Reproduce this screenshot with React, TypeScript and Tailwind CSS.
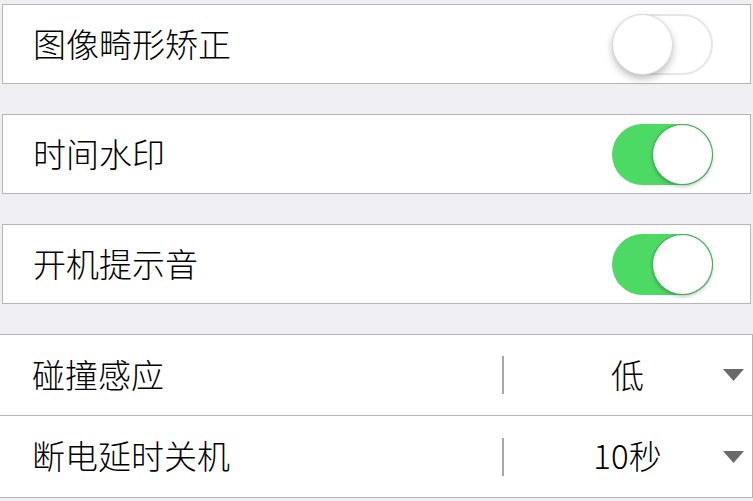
import React from "react";

function Toggle({ on }: { on: boolean }) {
  return on ? (
    <div className="relative h-[61px] w-[101px] rounded-full bg-[#4cd964]">
      <div className="absolute right-[1px] top-[1px] h-[59px] w-[59px] rounded-full bg-white shadow-[0_2px_4px_rgba(0,0,0,0.3)] ring-1 ring-[#3fae55]" />
    </div>
  ) : (
    <div className="relative h-[61px] w-[101px] rounded-full border-2 border-[#e6e6e6] bg-white">
      <div className="absolute left-[-1px] top-[-1px] h-[59px] w-[59px] rounded-full bg-white shadow-[0_4px_8px_rgba(0,0,0,0.3)] ring-1 ring-[#dcdcdc]" />
    </div>
  );
}

function ToggleRow({ label, on }: { label: string; on: boolean }) {
  return (
    <div className="mx-[2px] flex h-[80px] items-center justify-between border border-[#b5b5b5] bg-white pl-[30px] pr-[37px]">
      <span className="-mt-[2px] text-[33px] font-light leading-none text-black">{label}</span>
      <Toggle on={on} />
    </div>
  );
}

function SelectRow({ label, value, first }: { label: string; value: string; first?: boolean }) {
  return (
    <div
      className={
        "flex h-[82px] items-center border-b border-r border-[#b5b5b5] bg-white pl-[32px] " +
        (first ? "border-t" : "")
      }
    >
      <span className="-mt-[2px] w-[470px] text-[33px] font-light leading-none text-black">{label}</span>
      <div className="h-[38px] w-[2px] bg-[#a8a8a8]" />
      <div className="flex flex-1 items-center">
        <span className="-mt-[2px] flex-1 pl-[28px] text-center text-[33px] font-light leading-none text-black">{value}</span>
        <svg width="21" height="12" viewBox="0 0 21 12" className="mr-[8px]">
          <polygon points="0,0 21,0 10.5,12" fill="#6a6a6a" />
        </svg>
      </div>
    </div>
  );
}

export default function App() {
  return (
    <div
      className="h-[501px] w-[753px] overflow-hidden bg-[#efeff4] pt-[4px]"
      style={{ fontFamily: '"Noto Sans CJK SC", "Noto Sans", sans-serif' }}
    >
      <ToggleRow label="图像畸形矫正" on={false} />
      <div className="h-[30px]" />
      <ToggleRow label="时间水印" on={true} />
      <div className="h-[30px]" />
      <ToggleRow label="开机提示音" on={true} />
      <div className="h-[30px]" />
      <SelectRow label="碰撞感应" value="低" first />
      <SelectRow label="断电延时关机" value="10秒" />
    </div>
  );
}
